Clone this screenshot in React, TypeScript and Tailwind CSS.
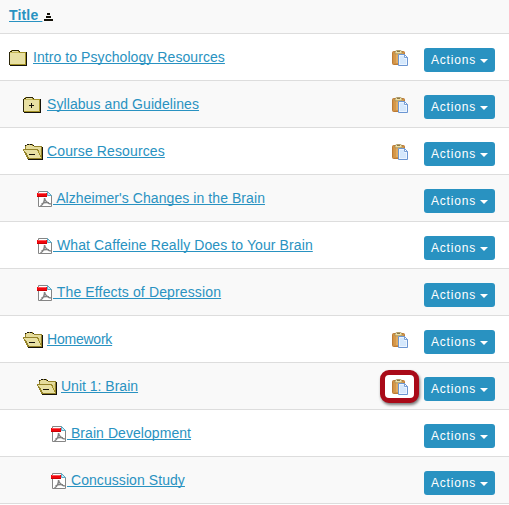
import React from "react";

type Kind = "closed" | "plus" | "open" | "pdf";
type Row = { label: string; kind: Kind; level: number; tracking: string; paste?: boolean; marked?: boolean };

const rows: Row[] = [
  { label: "Intro to Psychology Resources", kind: "closed", level: 0, tracking: "tracking-[0.07px]", paste: true },
  { label: "Syllabus and Guidelines", kind: "plus", level: 1, tracking: "tracking-[0.08px]", paste: true },
  { label: "Course Resources", kind: "open", level: 1, tracking: "tracking-[0.12px]", paste: true },
  { label: "Alzheimer's Changes in the Brain", kind: "pdf", level: 2, tracking: "tracking-[0.07px]" },
  { label: "What Caffeine Really Does to Your Brain", kind: "pdf", level: 2, tracking: "tracking-[0.1px]" },
  { label: "The Effects of Depression", kind: "pdf", level: 2, tracking: "tracking-[0.14px]" },
  { label: "Homework", kind: "open", level: 1, tracking: "tracking-[-0.22px]", paste: true },
  { label: "Unit 1: Brain", kind: "open", level: 2, tracking: "tracking-[0px]", paste: true, marked: true },
  { label: "Brain Development", kind: "pdf", level: 3, tracking: "tracking-[0.06px]" },
  { label: "Concussion Study", kind: "pdf", level: 3, tracking: "tracking-[0.07px]" },
];

const indents = ["pl-[9px]", "pl-[23px]", "pl-[37px]", "pl-[51px]"];

function ClosedFolder({ plus }: { plus?: boolean }) {
  return (
    <svg width="18" height="16" viewBox="0 0 18 16" shapeRendering="crispEdges" className="block">
      <path d="M1 1h1V0h8v1h1v1h6v13H1v-1H0V2h1z" fill="#a39226" />
      <path d="M3 1h6v1H3zM1 3h15v11H1z" fill="#e8e0a3" />
      <path d="M1 2h9v1H1z" fill="#c4b758" />
      <path d="M3 0h7v1H3zM1 1h2v1H1zM10 1h1v1h-1zM0 2h1v13H0z" fill="#2b2509" />
      <path d="M17 2h1v14H1v-1h16z" fill="#15120a" />
      {plus && <path d="M8 6h1v2h2v1H9v2H8V9H6V8h2z" fill="#15120a" />}
    </svg>
  );
}

function OpenFolder() {
  return (
    <svg width="20" height="16" viewBox="0 0 20 16" shapeRendering="crispEdges" className="block">
      <path d="M4 0h6v1h1v1h8v14H5v-1H4v-2H3v-2H2V9H1V7H0V5h2V1h2z" fill="#94832a" />
      <path d="M4 1h5v1h2v1h7v5h-2V6h-1V5H3V2h1z" fill="#e5dc9c" />
      <path d="M1 6h13v1h1v2h1v2h1v2h1v1H6v-1H5v-2H4V9H3V8H2V7H1z" fill="#e8e0a3" />
      <path d="M16 7h1V5h1v8h-1v-2h-1z" fill="#d9ce82" />
      <path d="M14 6h1v1h1v2h1v2h1v2h1v1h-1v-1h-1v-2h-1V9h-1V7h-1z" fill="#a39226" />
      <path d="M4 0h2v1H4zM7 0h2v1H7zM2 1h1v1H2zM10 1h1v1h-1zM19 3h1v13H5v-1h14zM6 10h6v1H6z" fill="#15120a" />
    </svg>
  );
}

function PdfIcon() {
  return (
    <svg width="15" height="16" viewBox="0 0 15 16" className="block">
      <path d="M1.5.5h9l4 4v11h-13z" fill="#fff" stroke="#858585" />
      <path d="M10.5.5v4h4z" fill="#c6ecf8" stroke="#55a4bf" strokeWidth=".9" />
      <path d="M0 2h10v4H0z" fill="#f0060c" />
      <path d="M1 2h8v1H1z" fill="#ff5458" />
      <path d="M0 5h10v1H0z" fill="#c90006" />
      <path d="M7.5 7c.1 3-1.5 6.4-4 8M7.6 7c.2 2.5 2.7 5.4 6.2 6M4.5 13c2-1.4 4.5-1.9 7.5-1.2" fill="none" stroke="#828282" strokeWidth="1.4" />
    </svg>
  );
}

function PasteIcon() {
  return (
    <svg width="16" height="16" viewBox="0 0 16 16" className="block">
      <rect x=".5" y="1.5" width="12" height="13" rx="1" fill="#d19245" stroke="#bd7b34" />
      <path d="M2 3h9v10H2z" fill="#e1ac62" />
      <path d="M2 3h2v10H2z" fill="#d5984b" />
      <path d="M3 3.8V1.7L4.7.5h4L10 1.7v2.1z" fill="#eee0a6" stroke="#a18a54" strokeWidth=".8" />
      <path d="M5 1h3v1H5z" fill="#8b794b" />
      <path d="M6.5 4.5h6l3 3v8h-9z" fill="#edf5ff" stroke="#6b96d2" />
      <path d="M8 6h4v3h2v5H8z" fill="#d5e8fc" />
      <path d="M12.5 4.5v3h3z" fill="#fff" stroke="#6b96d2" strokeWidth=".9" />
    </svg>
  );
}

export default function App() {
  return (
    <div className="h-[505px] w-[509px] overflow-hidden bg-white font-['Liberation_Sans',Arial,sans-serif] text-[14px] text-[#2992c1]">
      <div className="flex h-[34px] items-start border-b border-[#dddddd] bg-[#f9f9f9] pt-[7px] pl-[9px]">
        <a className="font-bold leading-4 tracking-[0.16px] whitespace-pre underline decoration-1 underline-offset-1 [text-decoration-skip-ink:none]">Title </a>
        <svg width="9" height="8" viewBox="0 0 9 8" shapeRendering="crispEdges" className="mt-[6px] ml-[2px]">
          <path d="M3 0h3v2H3zM2 3h5v2H2zM0 6h9v2H0z" fill="#15120a" />
        </svg>
      </div>
      {rows.map((row, i) => (
        <div key={row.label} className={`flex h-[47px] border-b border-[#dddddd] ${i % 2 ? "bg-[#f9f9f9]" : "bg-white"}`}>
          <div className={`flex w-[380px] items-start pt-4 ${indents[row.level]}`}>
            <div className={row.kind === "pdf" ? "w-4" : "w-6"}>
              {row.kind === "pdf" ? <PdfIcon /> : row.kind === "open" ? <OpenFolder /> : <ClosedFolder plus={row.kind === "plus"} />}
            </div>
            <a className={`-mt-px leading-4 whitespace-pre underline decoration-1 underline-offset-1 [text-decoration-skip-ink:none] ${row.tracking}`}>
              {row.kind === "pdf" ? " " + row.label : row.label}
            </a>
          </div>
          <div className="w-11 pt-[7px]">
            {row.paste && (
              <div className={`flex h-[33px] w-[39px] pl-[7px] pt-1 ${row.marked ? "rounded-[9px] border-[5px] border-[#a90a18] bg-white shadow-[1px_2px_3px_#777]" : "border-[5px] border-transparent"}`}>
                <PasteIcon />
              </div>
            )}
          </div>
          <button className="mt-[14px] flex h-6 w-[71px] items-center rounded-[3px] bg-[#2992c1] pl-[7px] text-[12px] leading-6 tracking-[0.8px] text-white">
            Actions
            <svg width="8" height="4" viewBox="0 0 8 4" className="mt-[2px] ml-[4px]">
              <path d="M0 0h8L4 4z" fill="white" />
            </svg>
          </button>
        </div>
      ))}
    </div>
  );
}
